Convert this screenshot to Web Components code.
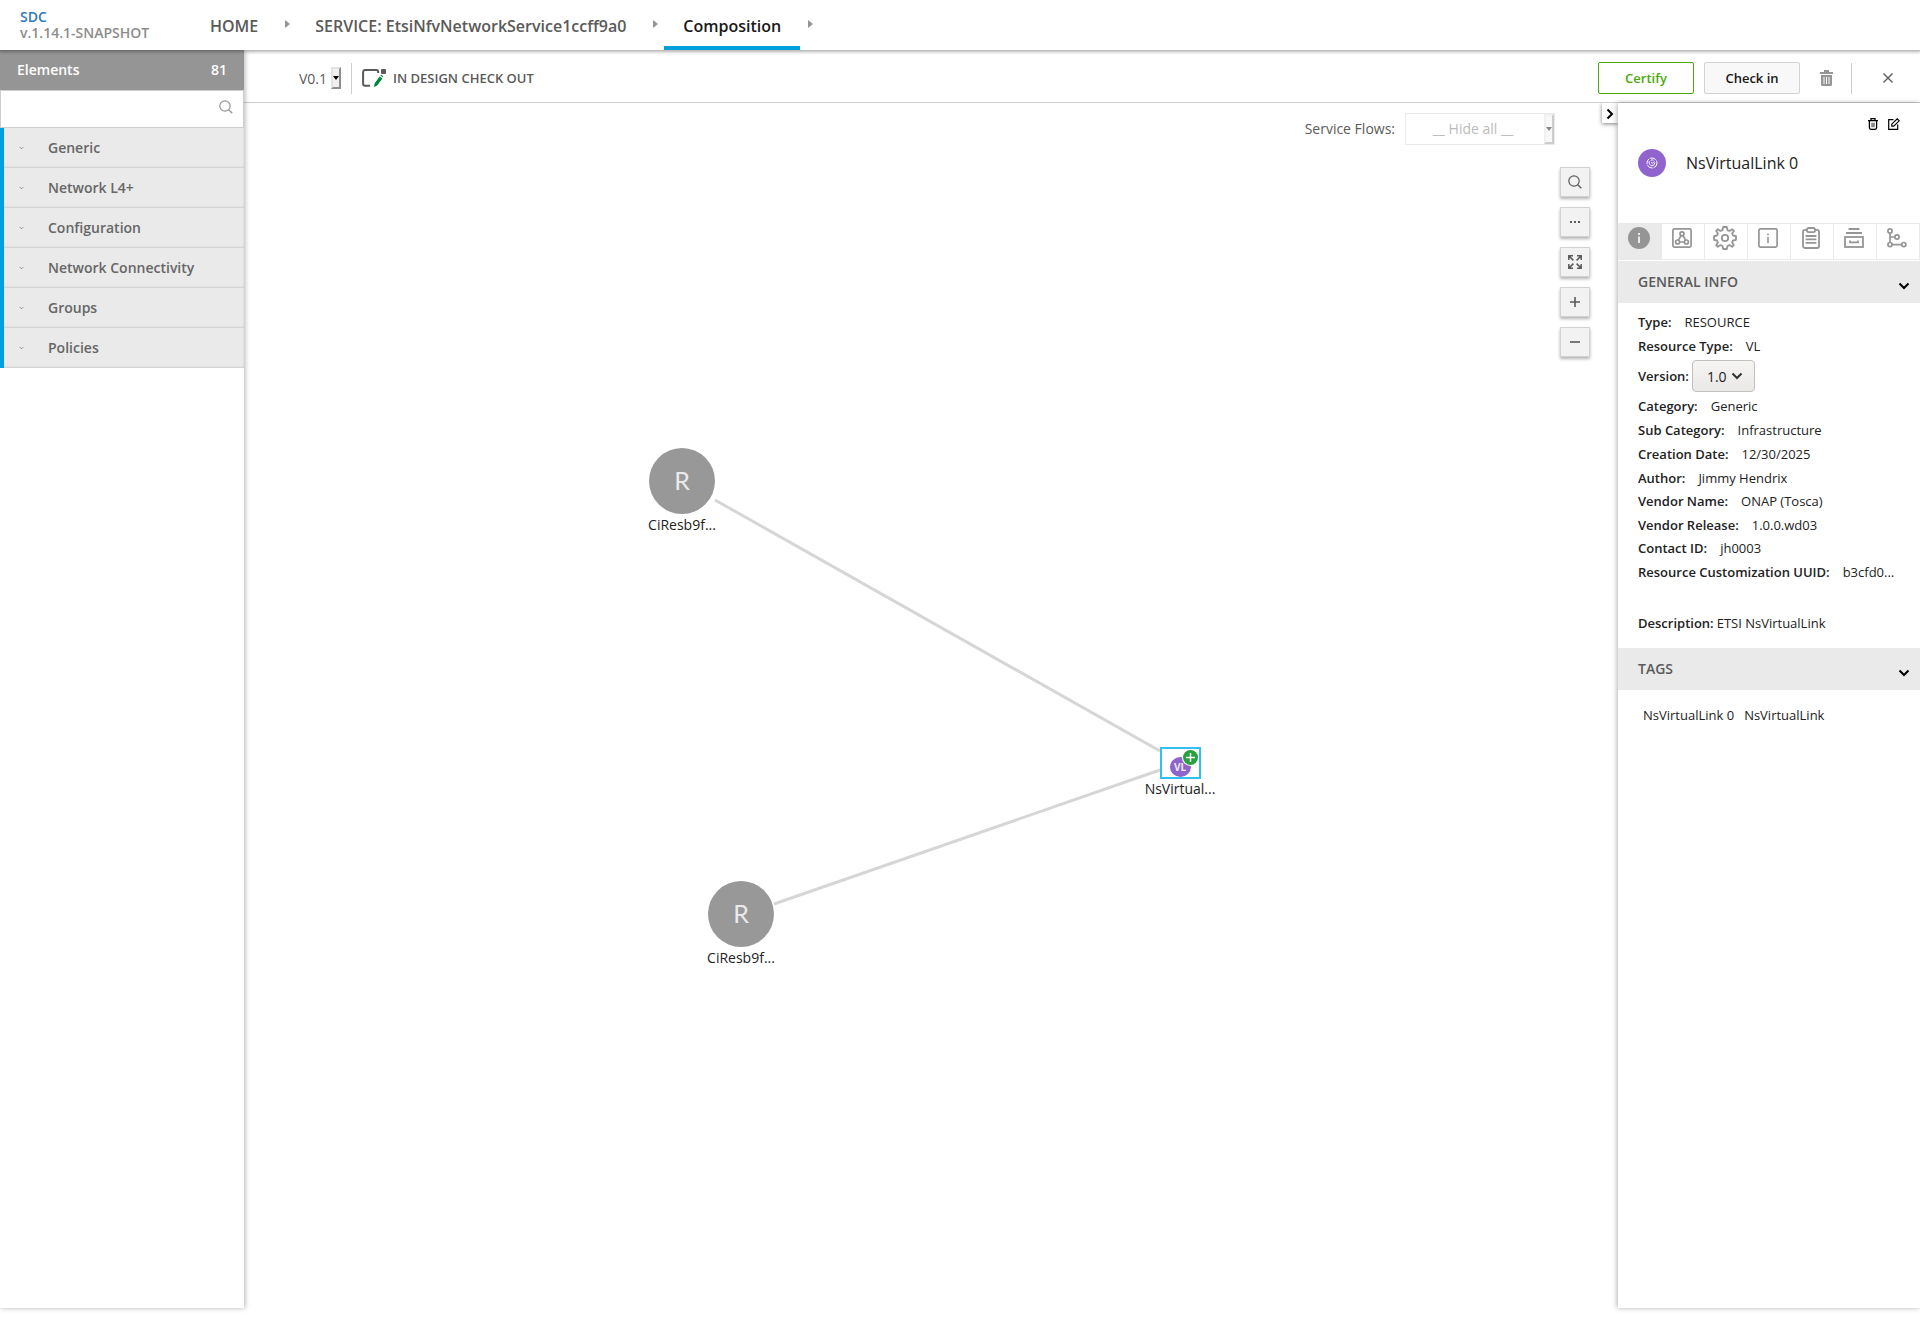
<!DOCTYPE html>
<html lang="en">
<head>
<meta charset="utf-8">
<title>SDC</title>
<style>
    html, body { margin: 0; height: 100%; }
    body { font-family: "Open Sans", "Noto Sans", sans-serif; font-size: 14px; color: #5a5a5a; background: #fff; }
</style>
</head>
<body>
<sdc-app></sdc-app>

<script>
const ICONS = {
    search: ['0 0 14 14', '<circle cx="6" cy="6" r="5.2" fill="none" stroke="currentColor" stroke-width="1.2"/><path d="M9.8 9.8L13.3 13.3" stroke="currentColor" stroke-width="1.3"/>'],
    chevron: ['0 0 12 8', '<path d="M1.5 1.5L6 6L10.5 1.5" fill="none" stroke="currentColor" stroke-width="2"/>'],
    arrow: ['0 0 5 8', '<path d="M0 0L5 4L0 8Z" fill="currentColor"/>'],
    caret: ['0 0 6 4', '<path d="M0 0H6L3 4Z" fill="currentColor"/>'],
    checkout: ['0 0 24 18', '<path d="M8 16.7H3Q1.1 16.7 1.1 14.7V3.1Q1.1 1.1 3 1.1H14.4Q16.2 1.1 16.2 3V4" fill="none" stroke="#5a5a5a" stroke-width="2"/><rect x="19" y="0" width="5" height="5" rx="1" fill="#5a5a5a"/><path d="M17.6 7.4L20.4 9.4L15.2 16.6L12 18L12.6 14.4ZM18.4 6.4L19.2 5.8L21.2 7.4L20.8 8.4Z" fill="#00853c"/>'],
    trash: ['0 0 13 16', '<path d="M4 0H9V2H13V4H0V2H4ZM1 5H12V14.5Q12 16 10.5 16H2.5Q1 16 1 14.5Z" fill="currentColor"/><path d="M4 7V14M6.5 7V14M9 7V14" stroke="#fff"/>'],
    close: ['0 0 10 10', '<path d="M.5 .5L9.5 9.5M9.5 .5L.5 9.5" stroke="currentColor" stroke-width="1.4"/>'],
    bin: ['0 0 10 12', '<path d="M0 2.6H10M3 2.4V.7H7V2.4M1.4 3V9.6Q1.4 11.3 3 11.3H7Q8.6 11.3 8.6 9.6V3" fill="none" stroke="currentColor" stroke-width="1.3"/><rect x="3.2" y="4.8" width="3.6" height="4.4" fill="#888"/>'],
    edit: ['0 0 12 12', '<path d="M5.5 1.6H.7V11.3H9.7V6.5M3.8 6.2L9.2.8L11.2 2.8L5.8 8.2H3.8Z" fill="none" stroke="currentColor" stroke-width="1.2"/>'],
    dots: ['0 0 10 2', '<path d="M0 0H2V2H0ZM4 0H6V2H4ZM8 0H10V2H8Z" fill="currentColor"/>'],
    expand: ['0 0 14 14', '<path d="M.8 5V.8H5M9 .8H13.2V5M13.2 9V13.2H9M5 13.2H.8V9M1 1L5.4 5.4M13 1L8.6 5.4M13 13L8.6 8.6M1 13L5.4 8.6" fill="none" stroke="currentColor" stroke-width="1.5"/>'],
    plus: ['0 0 10 10', '<path d="M0 5H10M5 0V10" stroke="currentColor" stroke-width="1.6"/>'],
    minus: ['0 0 10 10', '<path d="M0 5H10" stroke="currentColor" stroke-width="1.6"/>'],
    info: ['0 0 22 22', '<circle cx="11" cy="11" r="11" fill="currentColor"/><path d="M10 6H12V8H10ZM10 9.5H12V16H10Z" fill="#eaeaea"/>'],
    structure: ['0 0 20 20', '<g fill="none" stroke="currentColor" stroke-width="1.7"><rect x=".9" y=".9" width="18.2" height="18.2" rx="1.5"/><circle cx="10" cy="5.8" r="2"/><circle cx="5.6" cy="14" r="2"/><circle cx="14.4" cy="14" r="2"/><path d="M9 7.6L6.5 12.2M11 7.6L13.5 12.2M7.6 14H12.4"/></g>'],
    gear: ['0 0 24 24', '<g fill="none" stroke="currentColor" stroke-width="1.8" stroke-linejoin="round"><circle cx="12" cy="12" r="3.2"/><path d="M10.2 1H13.8L14.5 4.1L16.6 5L19.3 3.3L20.9 4.9L19.1 7.5L20 9.5L23 10.2V13.8L20 14.5L19.1 16.6L20.8 19.2L19.2 20.8L16.6 19.1L14.5 20L13.8 23H10.2L9.5 20L7.4 19.1L4.8 20.8L3.2 19.2L4.9 16.6L4 14.5L1 13.8V10.2L4 9.5L4.9 7.4L3.2 4.8L4.8 3.2L7.4 4.9L9.5 4.1Z"/></g>'],
    details: ['0 0 20 20', '<rect x=".9" y=".9" width="18.2" height="18.2" rx="1.5" fill="none" stroke="currentColor" stroke-width="1.7"/><path d="M9.2 5.5H10.8V7.3H9.2ZM9.2 9H10.8V15H9.2Z" fill="currentColor"/>'],
    clipboard: ['0 0 18 22', '<g fill="none" stroke="currentColor" stroke-width="1.8"><rect x="1" y="2.8" width="16" height="18.2" rx="2"/><rect x="5" y="1" width="8" height="4.2" rx="1.6" fill="#fff"/><path d="M3.6 9H14.4M3.6 12.4H14.4M3.6 15.8H14.4"/></g>'],
    archive: ['0 0 20 20', '<g fill="none" stroke="currentColor" stroke-width="1.8"><path d="M4.6 1H15.4M2 5H18"/><rect x="1" y="9" width="18" height="10"/><path d="M6 12.6V14.4H14V12.6"/></g>'],
    tree: ['0 0 20 20', '<g fill="none" stroke="currentColor" stroke-width="1.7"><circle cx="3" cy="3" r="2.1"/><circle cx="10" cy="9" r="2.1"/><circle cx="3" cy="16.6" r="2.1"/><circle cx="16.8" cy="16.6" r="2.1"/><path d="M3 5V14.6M3 9H8M5 16.6H14.8"/></g>'],
    link: ['0 0 28 28', '<circle cx="14" cy="14" r="14" fill="#9063cd"/><g fill="none" stroke="#fff"><circle cx="14" cy="14" r="5" stroke-dasharray="6 1"/><path d="M11 12Q11 16.5 14 16.8Q16.8 16.5 16.8 13.4M12.6 11.4Q14 10.4 15.6 11.2M13 13.2L14.4 14.4L16.2 12.4" stroke-width=".9"/></g>']
};

class SdcIcon extends HTMLElement {
    constructor() {
        super();
        this.attachShadow({ mode: 'open' });
    }

    connectedCallback() {
        const [box, body] = ICONS[this.getAttribute('name')];
        const [, , w, h] = box.split(' ');
        this.shadowRoot.innerHTML = `
            <style>
                :host { display: inline-flex; flex: none; }
                svg { display: block; }
            </style>
            <svg width="${this.getAttribute('width') || w}" height="${this.getAttribute('height') || h}" viewBox="${box}" aria-hidden="true">${body}</svg>`;
    }
}
customElements.define('sdc-icon', SdcIcon);

// every other element only clones a static template
const define = (name, html) => {
    const template = document.createElement('template');
    template.innerHTML = html;
    customElements.define(name, class extends HTMLElement {
        constructor() {
            super();
            this.attachShadow({ mode: 'open' }).appendChild(template.content.cloneNode(true));
        }
    });
};

define('sdc-header', `
    <style>
        :host { display: flex; height: 50px; background: #fff; box-shadow: 0 1px 3px 1px rgba(0, 0, 0, .3); position: relative; z-index: 3; font-weight: 600; }
        .logo { width: 171px; padding: 9px 0 0 20px; line-height: 16px; color: #8c8c8c; }
        .logo a { display: block; color: #337ab7; text-decoration: none; }
        nav { display: flex; font-size: 16px; }
        nav a { display: flex; align-items: center; padding: 6px 19px 0; color: #5a5a5a; text-decoration: none; border-bottom: 4px solid transparent; box-sizing: border-box; }
        nav a.active { color: #191919; border-color: #009fdb; }
        nav sdc-icon { margin: 20px 6px 0 8px; color: #959595; }
    </style>
    <div class="logo"><a href="#">SDC</a>v.1.14.1-SNAPSHOT</div>
    <nav>
        <a href="#">HOME</a><sdc-icon name="arrow"></sdc-icon>
        <a href="#">SERVICE: EtsiNfvNetworkService1ccff9a0</a><sdc-icon name="arrow"></sdc-icon>
        <a href="#" class="active">Composition</a><sdc-icon name="arrow"></sdc-icon>
    </nav>
`);

define('palette-category', `
    <style>
        :host { display: block; }
        button { display: flex; align-items: center; width: 100%; height: 40px; padding: 0 0 2px 15px; border: 0; border-left: 4px solid #009fdb; background: #eaeaea; box-shadow: inset 0 -1px 2px rgba(0, 0, 0, .12); font: inherit; font-weight: 600; color: #666; text-align: left; }
        sdc-icon { width: 29px; padding-top: 2px; box-sizing: border-box; color: #808080; }
    </style>
    <button type="button"><sdc-icon name="chevron" width="5" height="4"></sdc-icon><slot></slot></button>
`);

define('sdc-palette', `
    <style>
        :host { display: block; width: 244px; flex: none; background: #fff; box-shadow: 1px 0 5px rgba(0, 0, 0, .3); position: relative; z-index: 2; }
        header { display: flex; justify-content: space-between; height: 40px; padding: 0 17px; line-height: 40px; background: #959595; color: #fff; font-weight: 600; }
        .search { display: flex; align-items: center; height: 38px; padding: 0 10px 4px 0; border: 1px solid #cdcdcd; box-sizing: border-box; color: #959595; }
        input { flex: 1; min-width: 0; height: 30px; border: 0; outline: 0; padding: 0 10px; font: inherit; }
    </style>
    <header><span>Elements</span><span>81</span></header>
    <label class="search"><input type="text" aria-label="Search elements"><sdc-icon name="search"></sdc-icon></label>
    <palette-category>Generic</palette-category>
    <palette-category>Network L4+</palette-category>
    <palette-category>Configuration</palette-category>
    <palette-category>Network Connectivity</palette-category>
    <palette-category>Groups</palette-category>
    <palette-category>Policies</palette-category>
`);

define('sdc-toolbar', `
    <style>
        :host { display: flex; align-items: center; height: 48px; padding: 4px 27px 0 55px; border-bottom: 1px solid #cdcdcd; }
        select { appearance: none; border: 0; padding: 0; background: none; font: inherit; color: #5a5a5a; width: 32px; }
        .drop { display: flex; align-items: center; justify-content: center; width: 6px; height: 18px; border: 2px outset #e3e3e3; background: #efefef; color: #000; }
        .line { width: 1px; height: 31px; background: #cdcdcd; margin: 0 10px; }
        .state { flex: 1; margin-left: 7px; font-size: 13px; font-weight: 600; }
        button { font: inherit; }
        .text { width: 96px; height: 32px; margin-right: 10px; padding: 0; border: 1px solid #d2d2d2; border-radius: 2px; background: #f8f8f8; color: #191919; font-size: 13px; font-weight: 600; }
        .certify { border-color: #4ca90c; background: #fff; color: #4ca90c; }
        .icon { display: flex; border: 0; padding: 0; background: none; color: #959595; }
        .trash { margin: 0 8px 0 10px; }
        .close { margin-left: 21px; color: #5a5a5a; }
    </style>
    <select aria-label="Version"><option>V0.1</option></select>
    <span class="drop"><sdc-icon name="caret"></sdc-icon></span>
    <span class="line"></span>
    <sdc-icon name="checkout"></sdc-icon>
    <span class="state">IN DESIGN CHECK OUT</span>
    <button type="button" class="text certify">Certify</button>
    <button type="button" class="text">Check in</button>
    <button type="button" class="icon trash" aria-label="Delete"><sdc-icon name="trash"></sdc-icon></button>
    <span class="line"></span>
    <button type="button" class="icon close" aria-label="Close"><sdc-icon name="close"></sdc-icon></button>
`);

define('graph-node', `
    <style>
        :host { display: flex; flex-direction: column; align-items: center; width: 80px; color: #222; position: absolute; }
        ::slotted(span) { line-height: 22px; }
        .disc { display: flex; align-items: center; justify-content: center; width: 66px; height: 64px; padding-bottom: 2px; border-radius: 50%; background: #989898; color: #eaeaea; font: 25px Lato, sans-serif; }
    </style>
    <div class="disc">R</div>
    <slot></slot>
`);

define('graph-link-node', `
    <style>
        :host { display: flex; flex-direction: column; align-items: center; width: 80px; color: #222; position: absolute; }
        .frame { width: 37px; height: 28px; border: 2px solid #33bff1; position: relative; background: #fff; }
        .disc { position: absolute; left: 8px; top: 8px; width: 21px; height: 20px; border-radius: 50%; background: #9063cd; color: #eee; font-size: 10px; font-weight: 700; line-height: 20px; text-align: center; }
        .add { position: absolute; right: 1px; top: 1px; width: 15px; height: 15px; border-radius: 50%; background: #28a03c; color: #fff; display: flex; align-items: center; justify-content: center; box-shadow: 0 0 0 1px #fff; }
        ::slotted(span) { line-height: 20px; }
    </style>
    <div class="frame"><div class="disc">VL</div><div class="add"><sdc-icon name="plus" width="9" height="9"></sdc-icon></div></div>
    <slot></slot>
`);

define('sdc-canvas', `
    <style>
        :host { display: block; flex: 1; position: relative; overflow: hidden; }
        .edges { position: absolute; inset: 0; width: 100%; height: 100%; }
        .overlay { position: absolute; top: 10px; right: 28px; display: flex; flex-direction: column; align-items: flex-end; }
        .flows { display: flex; align-items: center; gap: 10px; margin-right: 35px; }
        .flows label { padding-bottom: 2px; }
        .box { display: flex; width: 148px; height: 30px; border: 1px solid #eaeaea; }
        select { appearance: none; flex: 1; min-width: 0; border: 0; padding: 0 4px 2px 0; background: none; font: inherit; color: #bbb; text-align-last: center; opacity: 1; }
        .drop { display: flex; align-items: center; justify-content: center; width: 6px; border: 2px solid; border-color: #f0f0f0 #ccc #ccc #f0f0f0; background: #f8f8f8; color: #888; }
        .tools { display: flex; flex-direction: column; gap: 10px; margin: 22px 0 0; }
        .tools button { display: flex; align-items: center; justify-content: center; width: 30px; height: 30px; padding: 0; border: 1px solid #d2d2d2; background: #f2f2f2; color: #5a5a5a; box-shadow: 0 2px 3px rgba(0, 0, 0, .3); }
        .toggle { position: absolute; top: 0; right: 0; display: flex; align-items: center; justify-content: center; width: 16px; height: 20px; padding: 2px 0 0; border: 0; background: #fff; color: #000; box-shadow: 0 1px 4px rgba(0, 0, 0, .5); }
        .toggle sdc-icon { transform: rotate(-90deg); }
    </style>
    <svg class="edges"><path d="M471 397L916 648M530 801L916 667" stroke="#d6d6d6" stroke-width="3" fill="none"/></svg>
    <graph-node style="left: 398px; top: 345px"><span>CiResb9f...</span></graph-node>
    <graph-node style="left: 457px; top: 778px"><span>CiResb9f...</span></graph-node>
    <graph-link-node style="left: 896px; top: 644px"><span>NsVirtual...</span></graph-link-node>
    <div class="overlay">
        <div class="flows">
            <label for="flows">Service Flows:</label>
            <div class="box"><select id="flows"><option>__ Hide all __</option></select><span class="drop"><sdc-icon name="caret"></sdc-icon></span></div>
        </div>
        <div class="tools">
            <button type="button" aria-label="Search"><sdc-icon name="search"></sdc-icon></button>
            <button type="button" aria-label="More"><sdc-icon name="dots"></sdc-icon></button>
            <button type="button" aria-label="Fit"><sdc-icon name="expand"></sdc-icon></button>
            <button type="button" aria-label="Zoom in"><sdc-icon name="plus"></sdc-icon></button>
            <button type="button" aria-label="Zoom out"><sdc-icon name="minus"></sdc-icon></button>
        </div>
    </div>
    <button type="button" class="toggle" aria-label="Toggle details"><sdc-icon name="chevron"></sdc-icon></button>
`);

define('panel-section', `
    <style>
        :host { display: block; }
        button { display: flex; align-items: center; justify-content: space-between; width: 100%; height: 42px; padding: 0 10px 2px 20px; border: 0; background: #eaeaea; font: inherit; font-weight: 600; color: #5a5a5a; }
        sdc-icon { color: #000; padding-top: 10px; }
    </style>
    <button type="button"><slot name="title"></slot><sdc-icon name="chevron"></sdc-icon></button>
    <slot></slot>
`);

define('info-row', `
    <style>
        :host { display: flex; align-items: center; height: 24px; white-space: nowrap; }
        b { font-weight: 600; margin-right: var(--row-gap, 13px); }
    </style>
    <b><slot name="label"></slot></b><slot></slot>
`);

define('sdc-details', `
    <style>
        :host { display: block; width: 302px; flex: none; background: #fff; box-shadow: -1px 0 5px rgba(0, 0, 0, .3); position: relative; z-index: 1; font-size: 13px; color: #222; }
        button { display: flex; padding: 0; border: 0; background: none; color: #000; }
        .actions { display: flex; justify-content: flex-end; gap: 10px; padding: 15px 20px 0 0; }
        .name { display: flex; align-items: center; gap: 20px; padding: 19px 20px 46px; font-size: 16px; line-height: 28px; }
        .tabs { display: flex; height: 37px; margin-bottom: 1px; border: solid #eaeaea; border-width: 1px 1px 1px 0; box-sizing: border-box; }
        .tabs button { flex: 1; justify-content: center; align-items: center; padding: 0 3px 7px 0; color: #959595; border-left: 1px solid #eaeaea; }
        .tabs .active { background: #eaeaea; }
        panel-section { font-size: 14px; }
        .rows { font-size: 13px; padding: 7px 0 13px 20px; }
        .rows info-row:nth-child(2n+7) { height: 23px; }
        .rows .version { height: 36px; --row-gap: 3px; }
        .rows .text { margin-top: 28px; --row-gap: 3px; }
        select { appearance: none; height: 32px; width: 63px; padding: 0 0 0 14px; border: 1px solid #c4bfba; border-radius: 4px; background: linear-gradient(#f6f5f4, #e9e8e6); font: inherit; font-size: 14px; color: #222; }
        .pick { display: flex; align-items: center; color: #2e3436; }
        .pick sdc-icon { margin-left: -24px; pointer-events: none; }
        .tags { display: flex; gap: 10px; padding: 15px 25px; font-size: 13px; line-height: 20px; }
    </style>
    <div class="actions">
        <button type="button" aria-label="Delete"><sdc-icon name="bin"></sdc-icon></button>
        <button type="button" aria-label="Edit"><sdc-icon name="edit"></sdc-icon></button>
    </div>
    <div class="name"><sdc-icon name="link"></sdc-icon><span>NsVirtualLink 0</span></div>
    <div class="tabs">
        <button type="button" class="active" aria-label="Information"><sdc-icon name="info"></sdc-icon></button>
        <button type="button" aria-label="Composition"><sdc-icon name="structure"></sdc-icon></button>
        <button type="button" aria-label="Properties"><sdc-icon name="gear"></sdc-icon></button>
        <button type="button" aria-label="Artifacts"><sdc-icon name="details"></sdc-icon></button>
        <button type="button" aria-label="Requirements"><sdc-icon name="clipboard"></sdc-icon></button>
        <button type="button" aria-label="API artifacts"><sdc-icon name="archive"></sdc-icon></button>
        <button type="button" aria-label="Substitution"><sdc-icon name="tree"></sdc-icon></button>
    </div>
    <panel-section>
        <span slot="title">GENERAL INFO</span>
        <div class="rows">
            <info-row><span slot="label">Type:</span>RESOURCE</info-row>
            <info-row><span slot="label">Resource Type:</span>VL</info-row>
            <info-row class="version"><label slot="label" for="version">Version:</label><span class="pick"><select id="version"><option>1.0</option></select><sdc-icon name="chevron"></sdc-icon></span></info-row>
            <info-row><span slot="label">Category:</span>Generic</info-row>
            <info-row><span slot="label">Sub Category:</span>Infrastructure</info-row>
            <info-row><span slot="label">Creation Date:</span>12/30/2025</info-row>
            <info-row><span slot="label">Author:</span>Jimmy Hendrix</info-row>
            <info-row><span slot="label">Vendor Name:</span>ONAP (Tosca)</info-row>
            <info-row><span slot="label">Vendor Release:</span>1.0.0.wd03</info-row>
            <info-row><span slot="label">Contact ID:</span>jh0003</info-row>
            <info-row><span slot="label">Resource Customization UUID:</span>b3cfd0...</info-row>
            <info-row class="text"><span slot="label">Description:</span>ETSI NsVirtualLink</info-row>
        </div>
    </panel-section>
    <panel-section>
        <span slot="title">TAGS</span>
        <div class="tags"><span>NsVirtualLink 0</span><span>NsVirtualLink</span></div>
    </panel-section>
`);

define('sdc-app', `
    <style>
        :host { display: flex; flex-direction: column; min-height: 100vh; padding-bottom: 11px; box-sizing: border-box; }
        .body, .work { display: flex; flex: 1; }
        .main { display: flex; flex-direction: column; flex: 1; min-width: 0; }
    </style>
    <sdc-header></sdc-header>
    <div class="body">
        <sdc-palette></sdc-palette>
        <div class="main">
            <sdc-toolbar></sdc-toolbar>
            <div class="work">
                <sdc-canvas></sdc-canvas>
                <sdc-details></sdc-details>
            </div>
        </div>
    </div>
`);
</script>
</body>
</html>
